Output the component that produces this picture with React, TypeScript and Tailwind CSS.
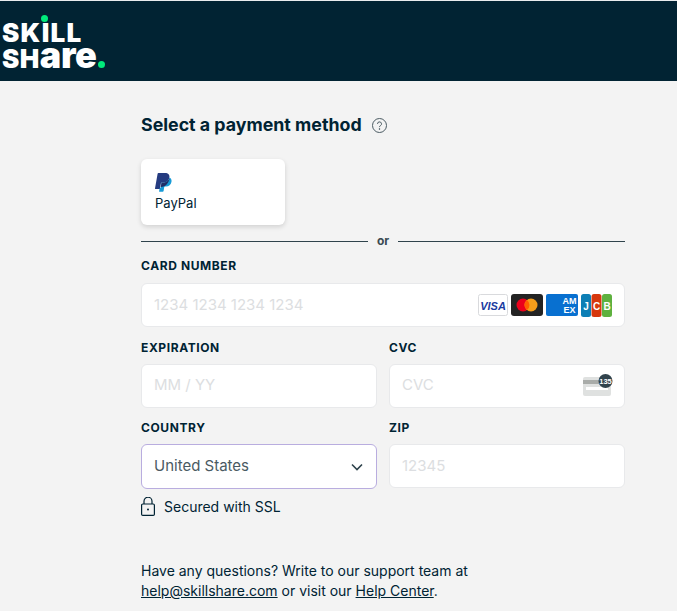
const font = { fontFamily: "Inter, sans-serif" };

function Label({ children }: { children: string }) {
  return <div className="h-[16px] text-[12px] leading-[16px] font-bold tracking-[0.05em] text-[#002333] mb-[8px]">{children}</div>;
}

function Field({ placeholder, children }: { placeholder: string; children?: React.ReactNode }) {
  return (
    <div className="h-[44px] bg-white border border-[#e8e9eb] rounded-[6px] flex items-center justify-between pl-[12px] pr-[12px]">
      <span className="text-[15px] text-[#dcdee1]">{placeholder}</span>
      {children}
    </div>
  );
}

function CardLogos() {
  return (
    <div className="flex items-center gap-[3px]">
      <svg width="30" height="22" viewBox="0 0 30 22">
        <rect x="0.5" y="0.5" width="29" height="21" rx="2" fill="#fff" stroke="#d9dadd" />
        <text x="15" y="15.5" textAnchor="middle" fontSize="11" fontWeight="900" fontStyle="italic" fill="#1a3aa0" fontFamily="Liberation Sans, sans-serif">VISA</text>
      </svg>
      <svg width="32" height="22" viewBox="0 0 32 22">
        <rect width="32" height="22" rx="3" fill="#232323" />
        <circle cx="12" cy="11" r="6.5" fill="#eb001b" />
        <circle cx="20" cy="11" r="6.5" fill="#f79e1b" />
        <path d="M16 5.9a6.5 6.5 0 0 1 0 10.2a6.5 6.5 0 0 1 0-10.2z" fill="#ff5f00" />
      </svg>
      <svg width="32" height="22" viewBox="0 0 32 22">
        <rect width="32" height="22" rx="2" fill="#0870d0" />
        <text x="23.5" y="10" textAnchor="middle" fontSize="9" fontWeight="700" fill="#fff" fontFamily="Liberation Sans, sans-serif">AM</text>
        <text x="23.5" y="18.5" textAnchor="middle" fontSize="9" fontWeight="700" fill="#fff" fontFamily="Liberation Sans, sans-serif">EX</text>
      </svg>
      <svg width="31" height="23" viewBox="0 0 31 23">
        <rect x="0" width="10" height="23" rx="2.5" fill="#0d7fb5" />
        <rect x="10.5" width="10" height="23" rx="2.5" fill="#d6380e" />
        <rect x="21" width="10" height="23" rx="2.5" fill="#5eb13f" />
        <text x="5" y="16" textAnchor="middle" fontSize="10" fontWeight="700" fill="#fff" fontFamily="Liberation Sans, sans-serif">J</text>
        <text x="15.5" y="16" textAnchor="middle" fontSize="10" fontWeight="700" fill="#fff" fontFamily="Liberation Sans, sans-serif">C</text>
        <text x="26" y="16" textAnchor="middle" fontSize="10" fontWeight="700" fill="#fff" fontFamily="Liberation Sans, sans-serif">B</text>
      </svg>
    </div>
  );
}

function CvcIcon() {
  return (
    <svg width="30" height="22" viewBox="0 0 30 22" className="-mr-[1px] -mt-[1px]">
      <rect x="0" y="3" width="28" height="19" rx="2" fill="#dfe1e0" />
      <rect x="0" y="6" width="28" height="4" fill="#a9aca9" />
      <rect x="3" y="13" width="22" height="3" fill="#fff" />
      <circle cx="22.5" cy="7" r="7" fill="#31434c" />
      <text x="22.5" y="9.5" textAnchor="middle" fontSize="7.5" fontWeight="700" fill="#fff" fontFamily="Liberation Sans, sans-serif">135</text>
    </svg>
  );
}

function PayPalIcon() {
  return (
    <svg width="17" height="19" viewBox="0 0 17 19" className="block">
      <path d="M3.4 0h6.5c3.4 0 5 1.8 4.5 4.6-.6 3.4-2.9 5.2-6 5.2H6l-.9 5.6c0 .3-.3.6-.7.6H0.6c-.4 0-.6-.3-.6-.6L2.6.7c.1-.4.4-.7.8-.7z" fill="#253b80" />
      <path d="M14.6 4.6c1.5.8 2.2 2.3 1.9 4.2-.5 3-2.6 4.7-5.5 4.7h-1c-.4 0-.7.3-.8.7l-.6 3.9c-.1.4-.4.7-.8.7H4.6c-.4 0-.6-.3-.5-.6l.6-3.2h.4c.3 0 .6-.3.7-.6l.7-4.6h1.7c3.2 0 5.7-1.9 6.4-5.2z" fill="#179bd7" />
      <path d="M14.6 4.6c-.7 3.3-3.2 5.2-6.4 5.2H6.5l-.7 4.2c2.6-.2 4.6-1 5.8-2.4 1.6-1.8 3-4.5 3-7z" fill="#222d65" />
    </svg>
  );
}

export default function App() {
  return (
    <div className="min-h-[611px] bg-[#f3f3f3] overflow-hidden text-[#002333]" style={font}>
      <header className="h-[81px] bg-[#012333] border-t border-[#e9ecee]">
        <div className="relative w-[110px] pl-[2px] pt-[20px] text-white font-black">
          <div className="text-[26px] leading-[24px] tracking-[0.05em]">SKILL</div>
          <div className="text-[26px] leading-[24px] whitespace-nowrap tracking-[0.02em] -mt-[2px]">
            SH<span className="text-[36px] tracking-[-0.01em]">are</span>
            <span className="inline-block w-[7px] h-[7px] rounded-full bg-[#00ea7b] ml-[1px]" />
          </div>
          <span className="absolute left-[41px] top-[14px] w-[7px] h-[7px] rounded-full bg-[#00ea7b]" />
        </div>
      </header>

      <main className="ml-[141px] w-[484px]">
        <div className="flex items-center gap-[10px] pt-[32px] pb-[22px]">
          <h1 className="text-[17.8px] leading-[24px] font-bold">Select a payment method</h1>
          <svg width="15" height="15" viewBox="0 0 15 15" fill="none" stroke="#4b5b63" strokeWidth="1">
            <circle cx="7.5" cy="7.5" r="7" />
            <path d="M5.5 5.9a2 2 0 1 1 3 1.7c-.7.4-1 .8-1 1.5" />
            <circle cx="7.5" cy="11" r=".4" fill="#4b5b63" />
          </svg>
        </div>

        <div className="w-[144px] h-[66px] bg-white rounded-[6px] shadow-[0_2px_5px_rgba(0,0,0,0.14)] pl-[14px] pt-[14px]">
          <PayPalIcon />
          <div className="text-[13px] leading-[16px] mt-[3px]">PayPal</div>
        </div>

        <div className="flex items-center gap-[8px] mt-[8px] h-[16px]">
          <div className="h-px bg-[#2f434c] flex-1" />
          <span className="text-[12px] font-bold text-[#3a4a52] px-[1px]">or</span>
          <div className="h-px bg-[#2f434c] flex-1" />
        </div>

        <div className="mt-[9px]">
          <div className="pb-[1px]"><Label>CARD NUMBER</Label></div>
          <Field placeholder="1234 1234 1234 1234"><CardLogos /></Field>
        </div>

        <div className="grid grid-cols-2 gap-x-[12px] mt-[12.5px]">
          <div>
            <Label>EXPIRATION</Label>
            <Field placeholder="MM / YY" />
          </div>
          <div>
            <Label>CVC</Label>
            <Field placeholder="CVC"><CvcIcon /></Field>
          </div>
        </div>

        <div className="grid grid-cols-2 gap-x-[12px] mt-[12.5px]">
          <div>
            <Label>COUNTRY</Label>
            <div className="h-[45px] bg-white border border-[#b9addf] rounded-[6px] flex items-center justify-between pl-[12px] pr-[13px]">
              <span className="text-[15px] text-[#4a5a62]">United States</span>
              <svg width="12" height="8" viewBox="0 0 12 8" fill="none" stroke="#2f434c" strokeWidth="1.6">
                <path d="M1 1.5L6 6.5l5-5" />
              </svg>
            </div>
          </div>
          <div>
            <Label>ZIP</Label>
            <Field placeholder="12345" />
          </div>
        </div>

        <div className="flex items-center gap-[9px] mt-[7px] h-[20px]">
          <svg width="14" height="19" viewBox="0 0 14 19" fill="none" stroke="#002333" strokeWidth="1.2">
            <rect x="0.6" y="7" width="12.8" height="11.4" rx="1.2" />
            <path d="M3 7V4.2a4 4 0 0 1 8 0V7" />
            <circle cx="7" cy="12.5" r="1" fill="#002333" stroke="none" />
          </svg>
          <span className="text-[14px]">Secured with SSL</span>
        </div>

        <p className="mt-[45px] text-[14px] leading-[20px] w-[380px]">
          Have any questions? Write to our support team at <a className="underline">help@skillshare.com</a> or visit our <a className="underline">Help Center</a>.
        </p>
      </main>
    </div>
  );
}
